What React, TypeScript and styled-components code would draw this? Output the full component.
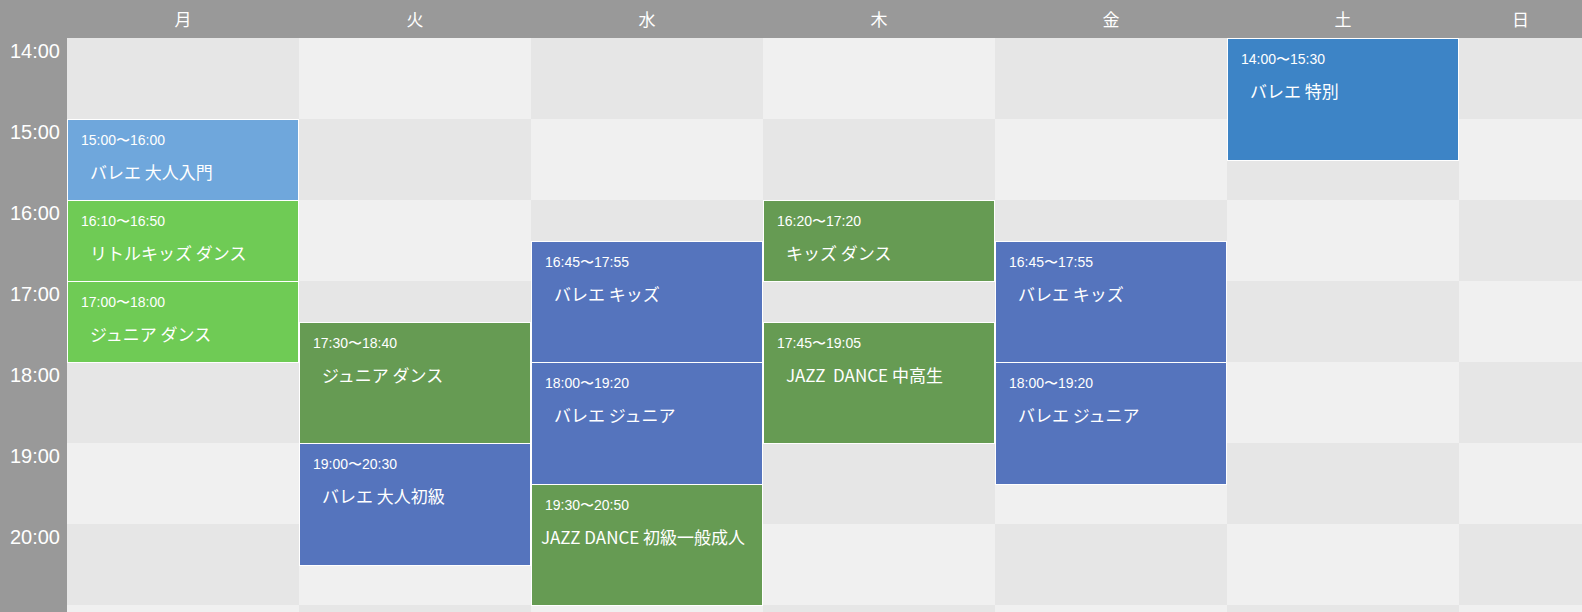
import React from "react";
import styled, { createGlobalStyle } from "styled-components";

const Global = createGlobalStyle`
  html, body { margin: 0; padding: 0; overflow: hidden; background: #f0f0f0; }
  body { font-family: "Noto Sans CJK JP", "Liberation Sans", sans-serif; }
`;

const HOUR = 81;
const DAYS = ["月", "火", "水", "木", "金", "土", "日"];
const HOURS = [14, 15, 16, 17, 18, 19, 20, 21];

const COLORS: Record<string, string> = {
  sky: "#6fa7dc",
  lime: "#6fcb55",
  green: "#669b53",
  blue: "#5574bd",
  deep: "#3d84c6",
};

type Ev = { day: number; s: number; e: number; label: string; title: string; c: string; tight?: boolean };
const EVENTS: Ev[] = [
  { day: 0, s: 15, e: 16, label: "15:00〜16:00", title: "バレエ 大人入門", c: "sky" },
  { day: 0, s: 16, e: 17, label: "16:10〜16:50", title: "リトルキッズ ダンス", c: "lime" },
  { day: 0, s: 17, e: 18, label: "17:00〜18:00", title: "ジュニア ダンス", c: "lime" },
  { day: 1, s: 17.5, e: 19, label: "17:30〜18:40", title: "ジュニア ダンス", c: "green" },
  { day: 1, s: 19, e: 20.5, label: "19:00〜20:30", title: "バレエ 大人初級", c: "blue" },
  { day: 2, s: 16.5, e: 18, label: "16:45〜17:55", title: "バレエ キッズ", c: "blue" },
  { day: 2, s: 18, e: 19.5, label: "18:00〜19:20", title: "バレエ ジュニア", c: "blue" },
  { day: 2, s: 19.5, e: 21, label: "19:30〜20:50", title: "JAZZ DANCE 初級一般成人", c: "green", tight: true },
  { day: 3, s: 16, e: 17, label: "16:20〜17:20", title: "キッズ ダンス", c: "green" },
  { day: 3, s: 17.5, e: 19, label: "17:45〜19:05", title: "JAZZ\u00a0\u00a0DANCE 中高生", c: "green" },
  { day: 4, s: 16.5, e: 18, label: "16:45〜17:55", title: "バレエ キッズ", c: "blue" },
  { day: 4, s: 18, e: 19.5, label: "18:00〜19:20", title: "バレエ ジュニア", c: "blue" },
  { day: 5, s: 14, e: 15.5, label: "14:00〜15:30", title: "バレエ 特別", c: "deep" },
];

const Page = styled.div`
  display: grid;
  grid-template-columns: 67px repeat(6, 232px) 123px;
  grid-template-rows: 38px auto;
  width: 1582px;
  height: 612px;
  overflow: hidden;
`;

const HeadCell = styled.div`
  background: #999999;
  color: #fff;
  font-size: 17px;
  display: flex;
  align-items: center;
  justify-content: center;
  padding-bottom: 2px;
`;

const TimeCol = styled.div`
  background: #999999;
  display: flex;
  flex-direction: column;
  overflow: hidden;
`;

const TimeLabel = styled.div`
  height: ${HOUR}px;
  flex: none;
  color: #fff;
  font-family: "Liberation Sans", Arial, sans-serif;
  font-size: 20px;
  text-align: right;
  padding-right: 7px;
  padding-top: 1px;
  line-height: 24px;
  box-sizing: border-box;
`;

const DayCol = styled.div`
  position: relative;
  display: flex;
  flex-direction: column;
  overflow: hidden;
`;

const Cell = styled.div<{ $dark: boolean }>`
  height: ${HOUR}px;
  flex: none;
  background: ${(p) => (p.$dark ? "#e6e6e6" : "#f0f0f0")};
`;

const Block = styled.div<{ $bg: string }>`
  position: absolute;
  left: 0;
  right: 0;
  box-sizing: border-box;
  border: 1px solid #fff;
  background: ${(p) => p.$bg};
  color: #fff;
  overflow: hidden;
`;

const BTime = styled.div`
  font-family: "Liberation Sans", Arial, sans-serif;
  font-size: 14px;
  padding: 11px 0 0 13px;
  line-height: 18px;
`;

const BTitle = styled.div<{ $tight?: boolean }>`
  font-size: 17px;
  padding: 11px 0 0 ${(p) => (p.$tight ? "9px" : "22px")};
  line-height: 24px;
  white-space: nowrap;
`;

export default function App() {
  return (
    <>
      <Global />
      <Page>
        <HeadCell />
        {DAYS.map((d) => (
          <HeadCell key={d}>{d}</HeadCell>
        ))}
        <TimeCol>
          {HOURS.slice(0, 7).map((h) => (
            <TimeLabel key={h}>{h}:00</TimeLabel>
          ))}
        </TimeCol>
        {DAYS.map((d, di) => (
          <DayCol key={d}>
            {HOURS.map((h) => (
              <Cell key={h} $dark={(di + h) % 2 === 0} />
            ))}
            {EVENTS.filter((e) => e.day === di).map((e, i) => (
              <Block
                key={i}
                $bg={COLORS[e.c]}
                style={{ top: (e.s - 14) * HOUR, height: (e.e - e.s) * HOUR + 1 }}
              >
                <BTime>{e.label}</BTime>
                <BTitle $tight={e.tight}>{e.title}</BTitle>
              </Block>
            ))}
          </DayCol>
        ))}
      </Page>
    </>
  );
}
